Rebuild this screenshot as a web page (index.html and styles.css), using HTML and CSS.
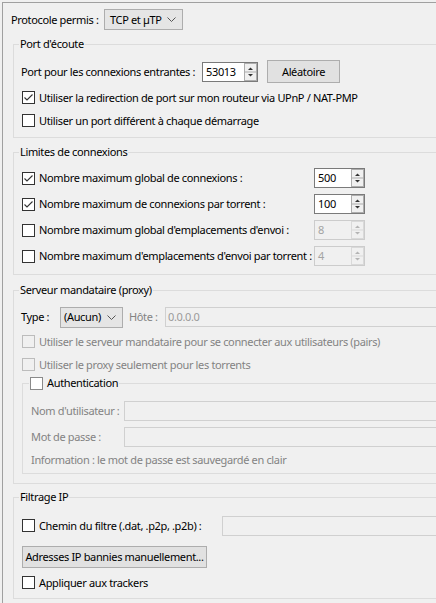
FILE: index.html
```html
<!DOCTYPE html>
<html lang="fr">
<head>
<meta charset="utf-8">
<title>Options - Connexion</title>
<link rel="stylesheet" href="styles.css">
</head>
<body>
<div class="frame">
  <div class="proto-row">
    <span class="proto-label">Protocole permis :</span>
    <div class="combo combo-proto"><span>TCP et µTP</span><svg class="chev" width="9" height="5" viewBox="0 0 9 5"><path d="M0.5 0.5L4.5 4.5L8.5 0.5"/></svg></div>
  </div>

  <fieldset class="group g-port">
    <legend>Port d'écoute</legend>
    <div class="port-row">
      <span class="port-label">Port pour les connexions entrantes :</span>
      <div class="spin spin-port"><span class="spin-val">53013</span><svg class="spin-arrows" width="13" height="18" viewBox="0 0 13 18"><rect class="arr-box" x="0.5" y="0.5" width="12" height="17"/><path class="arr-line" d="M0.5 9H12.5"/><path class="arr-tri" d="M4 7h5L6.5 4.5z"/><path class="arr-tri" d="M4 11h5l-2.5 2.5z"/></svg></div>
      <button class="btn btn-rand" type="button">Aléatoire</button>
    </div>
    <div class="check row-gap"><span class="box"><svg class="tick" width="11" height="11" viewBox="0 0 11 11"><path d="M1.5 5.5L4 8L9.5 2.5"/></svg></span><span>Utiliser la redirection de port sur mon routeur via UPnP / NAT-PMP</span></div>
    <div class="check row-gap"><span class="box"></span><span>Utiliser un port différent à chaque démarrage</span></div>
  </fieldset>

  <fieldset class="group g-limits">
    <legend>Limites de connexions</legend>
    <div class="limit-row">
      <div class="check limit-check"><span class="box"><svg class="tick" width="11" height="11" viewBox="0 0 11 11"><path d="M1.5 5.5L4 8L9.5 2.5"/></svg></span><span>Nombre maximum global de connexions :</span></div>
      <div class="spin spin-limit"><span class="spin-val">500</span><svg class="spin-arrows" width="13" height="18" viewBox="0 0 13 18"><rect class="arr-box" x="0.5" y="0.5" width="12" height="17"/><path class="arr-line" d="M0.5 9H12.5"/><path class="arr-tri" d="M4 7h5L6.5 4.5z"/><path class="arr-tri" d="M4 11h5l-2.5 2.5z"/></svg></div>
    </div>
    <div class="limit-row">
      <div class="check limit-check"><span class="box"><svg class="tick" width="11" height="11" viewBox="0 0 11 11"><path d="M1.5 5.5L4 8L9.5 2.5"/></svg></span><span>Nombre maximum de connexions par torrent :</span></div>
      <div class="spin spin-limit"><span class="spin-val">100</span><svg class="spin-arrows" width="13" height="18" viewBox="0 0 13 18"><rect class="arr-box" x="0.5" y="0.5" width="12" height="17"/><path class="arr-line" d="M0.5 9H12.5"/><path class="arr-tri" d="M4 7h5L6.5 4.5z"/><path class="arr-tri" d="M4 11h5l-2.5 2.5z"/></svg></div>
    </div>
    <div class="limit-row">
      <div class="check limit-check"><span class="box"></span><span>Nombre maximum global d'emplacements d'envoi :</span></div>
      <div class="spin spin-limit disabled"><span class="spin-val">8</span><svg class="spin-arrows" width="13" height="18" viewBox="0 0 13 18"><rect class="arr-box" x="0.5" y="0.5" width="12" height="17"/><path class="arr-line" d="M0.5 9H12.5"/><path class="arr-tri" d="M4 7h5L6.5 4.5z"/><path class="arr-tri" d="M4 11h5l-2.5 2.5z"/></svg></div>
    </div>
    <div class="limit-row">
      <div class="check limit-check"><span class="box"></span><span>Nombre maximum d'emplacements d'envoi par torrent :</span></div>
      <div class="spin spin-limit disabled"><span class="spin-val">4</span><svg class="spin-arrows" width="13" height="18" viewBox="0 0 13 18"><rect class="arr-box" x="0.5" y="0.5" width="12" height="17"/><path class="arr-line" d="M0.5 9H12.5"/><path class="arr-tri" d="M4 7h5L6.5 4.5z"/><path class="arr-tri" d="M4 11h5l-2.5 2.5z"/></svg></div>
    </div>
  </fieldset>

  <fieldset class="group g-proxy">
    <legend>Serveur mandataire (proxy)</legend>
    <div class="type-row">
      <span class="type-label">Type :</span>
      <div class="combo combo-type"><span>(Aucun)</span><svg class="chev" width="9" height="5" viewBox="0 0 9 5"><path d="M0.5 0.5L4.5 4.5L8.5 0.5"/></svg></div>
      <span class="host-label dis">Hôte :</span>
      <div class="field field-dis"><span class="field-val">0.0.0.0</span></div>
    </div>
    <div class="check check-dis gap-5"><span class="box"></span><span>Utiliser le serveur mandataire pour se connecter aux utilisateurs (pairs)</span></div>
    <div class="check check-dis row-gap"><span class="box"></span><span>Utiliser le proxy seulement pour les torrents</span></div>
    <fieldset class="sub-group">
      <legend class="auth-legend"><span class="box box-auth"></span><span>Authentication</span></legend>
      <div class="cred-row"><span class="cred-label dis">Nom d'utilisateur :</span><div class="field field-dis"></div></div>
      <div class="cred-row row-gap"><span class="cred-label dis">Mot de passe :</span><div class="field field-dis"></div></div>
      <p class="info dis">Information : le mot de passe est sauvegardé en clair</p>
    </fieldset>
  </fieldset>

  <fieldset class="group g-filter">
    <legend>Filtrage IP</legend>
    <div class="filter-row">
      <div class="check filter-check"><span class="box"></span><span>Chemin du filtre (.dat, .p2p, .p2b) :</span></div>
      <div class="field field-dis"></div>
    </div>
    <button class="btn btn-banned" type="button">Adresses IP bannies manuellement...</button>
    <div class="check row-gap"><span class="box"></span><span>Appliquer aux trackers</span></div>
  </fieldset>
</div>
</body>
</html>
```

FILE: styles.css
```css
* { box-sizing: border-box; }
html, body { margin: 0; padding: 0; }
body {
  background: #f0f0f0;
  font-family: "Noto Sans", "Open Sans", sans-serif;
  font-size: 11px;
  letter-spacing: -0.35px;
  line-height: 16px;
  color: #000;
  width: 436px;
  height: 603px;
  overflow: hidden;
}
.frame {
  margin: 2px 0 0 2px;
  border-top: 1px solid #a0a0a0;
  border-left: 1px solid #a0a0a0;
  padding: 6px 0 0 8px;
  width: 434px;
  height: 601px;
  overflow: hidden;
}

/* protocol row */
.proto-row { display: flex; align-items: center; height: 21px; }
.proto-label { width: 93px; white-space: nowrap; }

/* combobox */
.combo {
  display: flex; align-items: center; justify-content: space-between;
  height: 21px;
  border: 1px solid #adadad;
  background: #e5e5e5;
  padding: 0 6px 0 5px;
  white-space: nowrap;
}
.combo-proto { width: 79px; }
.combo-type { width: 63px; padding-left: 3px; }
.chev path { fill: none; stroke: #555; stroke-width: 1; }

/* group boxes: the right edge lies outside the visible area */
.group {
  margin: 6px 0 0 2px;
  padding: 8px 0 8px 7px;
  border: 1px solid #dcdcdc;
  border-right: 0;
  min-width: 0;
}
.group > legend, .sub-group > legend {
  padding: 0 1px;
  margin-left: -2px;
  line-height: 16px;
  height: 16px;
  white-space: nowrap;
}
.g-limits { margin-top: 6px; }
.g-proxy { margin-top: 7px; padding-bottom: 9px; }
.g-filter { margin-top: 5px; padding-top: 10px; padding-bottom: 7px; }

/* port row */
.port-row { display: flex; align-items: center; height: 23px; }
.port-label { width: 181px; white-space: nowrap; }

/* spin boxes */
.spin {
  display: flex; align-items: center;
  height: 20px;
  border: 1px solid #7a7a7a;
  background: #fff;
}
.spin-val { flex: 1; padding-left: 3px; line-height: 18px; }
.spin-arrows { display: block; flex: none; }
.arr-box { fill: #f0f0f0; stroke: #adadad; }
.arr-line { stroke: #adadad; fill: none; }
.arr-tri { fill: #333; }
.spin-port { width: 56px; }
.spin-limit { width: 51px; flex: none; }
.spin.disabled { border-color: #cccccc; background: #f0f0f0; color: #a3a3a3; }
.spin.disabled .arr-box { fill: #f0f0f0; stroke: #d9d9d9; }
.spin.disabled .arr-line { stroke: #d9d9d9; }
.spin.disabled .arr-tri { fill: #b4b4b4; }

/* buttons */
.btn {
  font: inherit;
  letter-spacing: inherit;
  color: #000;
  background: #e1e1e1;
  border: 1px solid #adadad;
  border-radius: 0;
  padding: 0;
  white-space: nowrap;
}
.btn-rand { width: 73px; height: 23px; margin-left: 9px; }
.btn-banned { display: block; width: 185px; height: 22px; margin: 10px 0 0 1px; }

/* checkboxes */
.check { display: flex; align-items: center; height: 17px; white-space: nowrap; }
.box {
  flex: none;
  display: flex; align-items: center; justify-content: center;
  width: 13px; height: 13px;
  margin: 0 4px 0 1px;
  border: 1px solid #333;
  background: #fff;
}
.tick path { fill: none; stroke: #333; stroke-width: 1.1; }
.row-gap { margin-top: 6px; }
.gap-5 { margin-top: 5px; }
.check-dis { color: #838383; }
.check-dis .box { border-color: #bcbcbc; background: #f0f0f0; }

/* limits */
.limit-row { display: flex; align-items: center; height: 20px; }
.limit-row + .limit-row { margin-top: 6px; }
.limit-check { width: 293px; flex: none; overflow: hidden; }

/* proxy */
.type-row { display: flex; align-items: center; height: 22px; }
.type-label { width: 39px; }
.host-label { width: 36px; margin-left: 6px; }
.dis { color: #838383; }
.field {
  flex: 1;
  height: 20px;
  border: 1px solid #d0d0d0;
  border-right: 0;
  background: #f0f0f0;
  min-width: 0;
}
.field-val { display: block; padding-left: 2px; line-height: 18px; color: #9a9a9a; }

.sub-group {
  margin: 2px 0 0 1px;
  padding: 10px 0 5px 8px;
  border: 1px solid #dcdcdc;
  border-right: 0;
  min-width: 0;
}
.auth-legend { display: flex; align-items: center; }
.auth-legend .box { margin: 0 4px 0 0; border-color: #8a8a8a; }
.cred-row { display: flex; align-items: center; height: 20px; }
.cred-label { width: 93px; white-space: nowrap; }
.info { margin: 5px 0 0 0; line-height: 16px; white-space: nowrap; }

/* filter */
.filter-row { display: flex; align-items: center; height: 21px; }
.filter-check { width: 201px; flex: none; }
```
